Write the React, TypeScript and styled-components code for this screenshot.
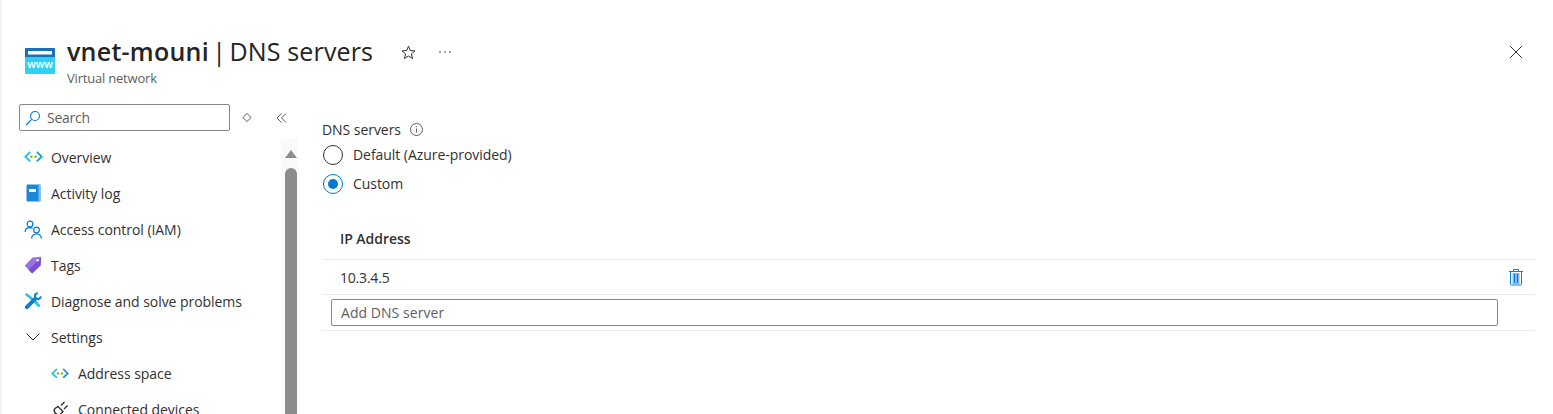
import styled, { createGlobalStyle } from "styled-components";

const GlobalStyle = createGlobalStyle`
  html, body {
    margin: 0;
    padding: 0;
    background: #fff;
    overflow: hidden;
  }
  * {
    box-sizing: border-box;
  }
  #root {
    font-family: "Open Sans", "Noto Sans", sans-serif;
    color: #323130;
  }
`;

const Page = styled.div`
  width: 1553px;
  height: 414px;
  overflow: hidden;
  display: flex;
  flex-direction: column;
  border-left: 2px solid #f3f3f3;
`;

const Header = styled.header`
  height: 104px;
  flex: none;
  display: flex;
  align-items: flex-start;
  padding: 35px 29px 0 23px;
`;

const Logo = styled.svg`
  width: 30px;
  height: 26px;
  margin-top: 13px;
  flex: none;
`;

const TitleBlock = styled.div`
  margin-left: 12px;
  width: 313px;
`;

const Title = styled.h1`
  margin: 0;
  font-size: 25px;
  line-height: 33px;
  font-weight: 400;
  white-space: nowrap;
  letter-spacing: -0.05px;
  word-spacing: -3px;
  color: #252423;
`;

const ResourceName = styled.span`
  font-weight: 600;
  letter-spacing: 0.25px;
`;

const BladeName = styled.span`
  letter-spacing: 0.15px;
  word-spacing: 0;
`;

const Subtitle = styled.div`
  font-size: 13px;
  line-height: 18px;
  margin-top: 1px;
  color: #605e5c;
  letter-spacing: -0.2px;
`;

const HeaderButton = styled.button<{ $gap: number }>`
  border: 0;
  background: none;
  padding: 0;
  margin: 9px 0 0 ${(p) => p.$gap}px;
  width: 16px;
  height: 16px;
  display: flex;
  align-items: center;
  justify-content: center;
  color: #323130;
`;

const Spacer = styled.div`
  flex: 1;
`;

const Body = styled.div`
  flex: 1;
  display: flex;
  min-height: 0;
`;

const Sidebar = styled.aside`
  width: 296px;
  flex: none;
  display: flex;
  flex-direction: column;
`;

const SearchRow = styled.div`
  height: 35px;
  flex: none;
  display: flex;
  align-items: flex-start;
  padding-left: 17px;
`;

const SearchBox = styled.div`
  width: 211px;
  height: 27px;
  border: 1px solid #8a8886;
  border-radius: 2px;
  display: flex;
  align-items: center;
  padding-left: 5px;
  gap: 6px;
  font-size: 14px;
  color: #605e5c;
  letter-spacing: -0.25px;
`;

const SearchTool = styled.button<{ $gap: number }>`
  border: 0;
  background: none;
  padding: 0;
  margin: 7px 0 0 ${(p) => p.$gap}px;
  width: 14px;
  height: 14px;
  display: flex;
  color: #605e5c;
`;

const NavArea = styled.div`
  flex: 1;
  min-height: 0;
  display: flex;
`;

const NavList = styled.nav`
  flex: 1;
  min-width: 0;
`;

const NavRow = styled.a<{ $nested?: boolean }>`
  height: 36px;
  display: flex;
  align-items: center;
  padding-left: ${(p) => (p.$nested ? 48 : 21)}px;
  font-size: 14px;
  color: #323130;
  white-space: nowrap;
  letter-spacing: -0.05px;
`;

const NavIcon = styled.span`
  width: 20px;
  height: 20px;
  flex: none;
  margin-right: 8px;
  display: flex;
  align-items: center;
  justify-content: center;
`;

const ScrollTrack = styled.div`
  width: 17px;
  flex: none;
  background: #fafafa;
  display: flex;
  flex-direction: column;
  align-items: flex-end;
  padding: 11px 1px 0 3px;
`;

const ScrollArrow = styled.div`
  width: 0;
  height: 0;
  border-left: 6.5px solid transparent;
  border-right: 6.5px solid transparent;
  border-bottom: 8px solid #8c8c8c;
`;

const ScrollThumb = styled.div`
  width: 12px;
  flex: 1;
  margin-top: 10px;
  background: #8c8c8c;
  border-radius: 6px 6px 0 0;
`;

const Content = styled.main`
  flex: 1;
  min-width: 0;
  padding: 16px 18px 0 24px;
`;

const FieldLabel = styled.div`
  display: flex;
  align-items: center;
  height: 18px;
  font-size: 14px;
  color: #323130;
  gap: 9px;
  letter-spacing: -0.05px;
`;

const RadioGroup = styled.div`
  margin-top: 2px;
  display: flex;
  flex-direction: column;
`;

const RadioRow = styled.label`
  height: 29px;
  display: flex;
  align-items: center;
  font-size: 14px;
  gap: 10px;
  padding-left: 1px;
  letter-spacing: -0.05px;
`;

const RadioCircle = styled.span<{ $checked?: boolean }>`
  width: 20px;
  height: 20px;
  border-radius: 50%;
  border: 1px solid ${(p) => (p.$checked ? "#0078d4" : "#323130")};
  display: flex;
  align-items: center;
  justify-content: center;
  &::after {
    content: "";
    display: ${(p) => (p.$checked ? "block" : "none")};
    width: 10px;
    height: 10px;
    border-radius: 50%;
    background: #0078d4;
  }
`;

const Table = styled.div`
  margin-top: 20px;
`;

const HeadRow = styled.div`
  height: 42px;
  display: flex;
  align-items: center;
  padding: 0 0 0 18px;
  font-size: 14px;
  font-weight: 600;
  border-bottom: 1px solid #edebe9;
  letter-spacing: -0.05px;
`;

const DataRow = styled.div`
  height: 35px;
  display: flex;
  align-items: center;
  justify-content: space-between;
  padding: 0 11px 0 18px;
  font-size: 14px;
  border-bottom: 1px solid #edebe9;
  letter-spacing: -0.2px;
`;

const InputRow = styled.div`
  height: 36px;
  padding: 4px 0 0 9px;
  border-bottom: 1px solid #edebe9;
`;

const TextBox = styled.div`
  width: 1167px;
  height: 27px;
  border: 1px solid #8a8886;
  border-radius: 2px;
  display: flex;
  align-items: center;
  padding-left: 9px;
  font-size: 14px;
  color: #605e5c;
  letter-spacing: 0.05px;
`;

const Peering = ({ size = 19 }: { size?: number }) => (
  <svg width={size} height={(size * 12) / 20} viewBox="0 0 20 12" fill="none">
    <path d="M6.500 1 1.500 6l5 5" stroke="#32bedd" strokeWidth="2" />
    <path d="M13.500 1l5 5-5 5" stroke="#1e9be8" strokeWidth="2" />
    <circle cx="7.800" cy="6" r="1.300" fill="#7fba00" />
    <circle cx="12.200" cy="6" r="1.300" fill="#7fba00" />
  </svg>
);

const Book = () => (
  <svg width="15" height="18" viewBox="0 0 15 18">
    <rect x="0.500" y="0.500" width="14" height="17" rx="1" fill="#1e88d8" />
    <rect x="12.500" y="0.500" width="2" height="17" fill="#83b9f9" />
    <rect x="3" y="5" width="7" height="3" fill="#fff" />
  </svg>
);

const People = () => (
  <svg width="19" height="19" viewBox="0 0 19 19" fill="none" stroke="#0078d4" strokeWidth="1.200">
    <circle cx="6" cy="4" r="2.900" />
    <path d="M1 12c.3-3 2-4.400 4.600-4.400 1.200 0 2.200.3 3 .9" />
    <circle cx="12.500" cy="10" r="2.800" stroke="#1a6fc4" />
    <path d="M7.600 18.500c.2-3 2-4.500 4.900-4.500s4.700 1.500 4.900 4.500" />
  </svg>
);

const Tag = () => (
  <svg width="18" height="18" viewBox="0 0 18 18">
    <path d="M8.500 1.500 16 0.800a1 1 0 0 1 1.200 1.200L16.500 9.500 8.200 17.500 0.700 9.800Z" fill="#9a72e0" />
    <path d="M16.500 9.500 8.200 17.500 4.500 13.700 17 1.500Z" fill="#7b4fcb" />
    <circle cx="13.700" cy="4.200" r="1.300" fill="#fff" />
  </svg>
);

const Tools = () => (
  <svg width="18" height="18" viewBox="0 0 18 18">
    <path d="M2 1 1 2l1.500 2.500 1.500.5 4 4-1 1 1.500 1 1-1 5 5.500 2-2L12 8.500l-1 1-1.500-1.500L10.500 7 4.500 2.500Z" fill="#32bedd" />
    <path d="M17.200 3.500 14.500 6 12.500 5.500 12 3.500 14.500 1C12.500 0 10.500 1 10 3c-.2.8 0 1.500.2 2L1.200 14a2 2 0 0 0 2.800 2.800L13 7.800c.5.2 1.200.3 2 .2 2-.5 3-2.500 2.200-4.500Z" fill="#0f7fd0" />
  </svg>
);

const Chevron = () => (
  <svg width="14" height="8" viewBox="0 0 14 8" fill="none" stroke="#323130" strokeWidth="1">
    <path d="M.5.500 7 7l6.500-6.500" />
  </svg>
);

const Plug = () => (
  <svg width="18" height="18" viewBox="0 0 18 18" fill="none" stroke="#323130" strokeWidth="1.400">
    <path d="M7 6.500 12 11.500 9.500 14a3 3 0 0 1-4 0l-1.500-1.500a3 3 0 0 1 0-4Z" />
    <path d="M4.500 13.500 1 17M10 5.500 13.500 2M13 9l3.500-3.500" />
  </svg>
);

const navItems = [
  { label: "Overview", icon: <Peering /> },
  { label: "Activity log", icon: <Book /> },
  { label: "Access control (IAM)", icon: <People /> },
  { label: "Tags", icon: <Tag /> },
  { label: "Diagnose and solve problems", icon: <Tools /> },
  { label: "Settings", icon: <Chevron /> },
  { label: "Address space", icon: <Peering size={18} />, nested: true },
  { label: "Connected devices", icon: <Plug />, nested: true },
];

const App = () => {
  return (
    <Page>
      <GlobalStyle />
      <Header>
        <Logo viewBox="0 0 30 26">
          <rect width="30" height="26" rx="1" fill="#32d0ee" />
          <path d="M1 0h28a1 1 0 0 1 1 1v8H0V1a1 1 0 0 1 1-1Z" fill="#1b6fb8" />
          <rect x="3" y="3" width="24" height="3.500" fill="#fff" />
          <text x="15" y="20" textAnchor="middle" fontSize="10.500" fontWeight="600" fill="#fff" fontFamily="Open Sans, sans-serif">
            www
          </text>
        </Logo>
        <TitleBlock>
          <Title>
            <ResourceName>vnet-mouni</ResourceName> | <BladeName>DNS servers</BladeName>
          </Title>
          <Subtitle>Virtual network</Subtitle>
        </TitleBlock>
        <HeaderButton $gap={20}>
          <svg width="15" height="15" viewBox="0 0 15 15" fill="none" stroke="#323130">
            <path d="M7.500 1.200 9.300 5.500l4.700.4-3.600 3 1.100 4.600-4-2.500-4 2.500 1.100-4.600-3.600-3 4.700-.4Z" />
          </svg>
        </HeaderButton>
        <HeaderButton $gap={21}>
          <svg width="14" height="4" viewBox="0 0 14 4" fill="#323130">
            <circle cx="2" cy="2" r=".8" />
            <circle cx="7" cy="2" r=".8" />
            <circle cx="12" cy="2" r=".8" />
          </svg>
        </HeaderButton>
        <Spacer />
        <HeaderButton $gap={0}>
          <svg width="14" height="14" viewBox="0 0 14 14" fill="none" stroke="#323130">
            <path d="M1 1l12 12M13 1 1 13" />
          </svg>
        </HeaderButton>
      </Header>
      <Body>
        <Sidebar>
          <SearchRow>
            <SearchBox>
              <svg width="16" height="16" viewBox="0 0 16 16" fill="none" stroke="#0078d4" strokeWidth="1.100">
                <circle cx="10" cy="6" r="4.500" />
                <path d="M6.700 9.300 1 15" />
              </svg>
              Search
            </SearchBox>
            <SearchTool $gap={10}>
              <svg width="14" height="14" viewBox="0 0 14 14" fill="none" stroke="#605e5c">
                <path d="M7 2.500 2.800 6.500 7 10.500 11.200 6.500Z" strokeLinejoin="round" />
              </svg>
            </SearchTool>
            <SearchTool $gap={21}>
              <svg width="14" height="14" viewBox="0 0 14 14" fill="none" stroke="#605e5c">
                <path d="M6.500 2.500 2 7l4.500 4.500M11 2.500 6.500 7l4.500 4.500" />
              </svg>
            </SearchTool>
          </SearchRow>
          <NavArea>
            <NavList>
              {navItems.map((item) => (
                <NavRow key={item.label} $nested={item.nested}>
                  <NavIcon>{item.icon}</NavIcon>
                  {item.label}
                </NavRow>
              ))}
            </NavList>
            <ScrollTrack>
              <ScrollArrow />
              <ScrollThumb />
            </ScrollTrack>
          </NavArea>
        </Sidebar>
        <Content>
          <FieldLabel>
            DNS servers
            <svg width="13" height="13" viewBox="0 0 13 13" fill="none" stroke="#605e5c">
              <circle cx="6.500" cy="6.500" r="6" />
              <path d="M6.500 5.500v4M6.500 3.200v1" />
            </svg>
          </FieldLabel>
          <RadioGroup>
            <RadioRow>
              <RadioCircle />
              Default (Azure-provided)
            </RadioRow>
            <RadioRow>
              <RadioCircle $checked />
              Custom
            </RadioRow>
          </RadioGroup>
          <Table>
            <HeadRow>IP Address</HeadRow>
            <DataRow>
              10.3.4.5
              <svg width="16" height="18" viewBox="0 0 16 18" fill="none">
                <rect x="4.500" y="5" width="7" height="11" fill="#83b9f9" />
                <rect x="6" y="6" width="1" height="9" fill="#0078d4" />
                <rect x="9" y="6" width="1" height="9" fill="#0078d4" />
                <path d="M1 3.500h14M2.500 3.500V16a1 1 0 0 0 1 1h9a1 1 0 0 0 1-1V3.500M5.500 3.500V1.500h5v2" stroke="#0f7fd0" />
              </svg>
            </DataRow>
            <InputRow>
              <TextBox>Add DNS server</TextBox>
            </InputRow>
          </Table>
        </Content>
      </Body>
    </Page>
  );
};

export default App;
